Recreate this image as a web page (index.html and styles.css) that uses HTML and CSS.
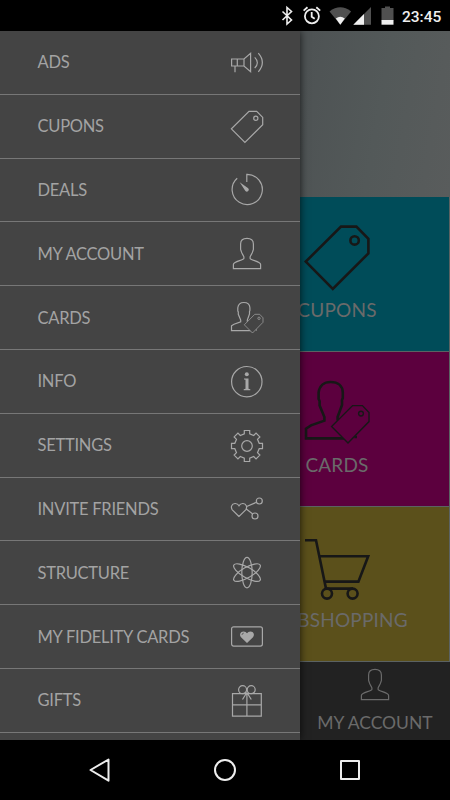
FILE: index.html
```
<!DOCTYPE html>
<html lang="en">
<head>
  <meta charset="UTF-8" />
  <meta name="viewport" content="width=device-width, initial-scale=1.0" />
  <title>Menu</title>
  <link rel="stylesheet" href="styles.css">
</head>
<body>
  <!-- shared icons, 32x32 -->
  <svg class="sprite">
    <symbol id="ads" viewBox="0 0 32 32" overflow="visible">
      <path d="M.6 12H13L19.6 6.3V24.6L13 19H.6ZM6.3 12V19M4 19V25.3M13 12V19M23.7 10.4Q29 15.6 23.7 21M27.3 6.2Q35.4 15.5 27.3 24.8" />
    </symbol>
    <symbol id="tag" viewBox="0 0 32 32" overflow="visible">
      <path d="M.4 17.8 13.9 31.4 31.7 13.7V6.4L25.7.3H18Z" />
      <circle cx="24.8" cy="7.2" r="2.1" />
    </symbol>
    <symbol id="deals" viewBox="0 0 32 32" overflow="visible">
      <path d="M15.8 8V.4A15.1 15.1 0 1 1 6.2 4.2" />
      <path class="solid" d="M8.7 8.2 17.2 14.2A1.7 1.7 0 0 1 14.4 17Z" />
    </symbol>
    <symbol id="person" viewBox="0 0 32 32" overflow="visible">
      <path d="M16 .4C12 .4 9.600 2.200 9.600 6V11.500L10.300 13.500C10.700 16 12.900 17.500 12.900 19V20.300C12.500 22.500 2.400 23 2.400 26.500V30.600H29.600V26.500C29.600 23 19.500 22.500 19.100 20.300V19C19.100 17.500 21.300 16 21.700 13.500L22.400 11.500V6C22.400 2.200 20 .4 16 .4Z" />
    </symbol>
    <symbol id="cards" viewBox="0 0 32 32" overflow="visible">
      <path d="M26 28H24.700M22 28.700H.5V23.800L3 22.200 9.700 19.800V18L7.300 12.300V10L6.800 9V5.800C7.200 2.500 9.500.5 12.800.5 16.500.5 18.800 2.500 18.900 5.800V8.500L18.500 9.500V12L16.300 18V19.700" />
      <path class="thin cover" d="M13.300 22.800 21.500 31 32 20.300V15.800L28.700 12.300H23.800Z" />
      <circle class="thin" cx="28" cy="16.300" r="1.200" />
    </symbol>
    <symbol id="info" viewBox="0 0 32 32" overflow="visible">
      <circle cx="15.800" cy="15.700" r="15.200" />
      <circle class="solid" cx="15.800" cy="8.200" r="2" />
      <path class="solid" d="M13 12.500H17.500V22.800L19.300 23.200V24.200H12.700V23.200L14.500 22.800V13.800L13 13.500Z" />
    </symbol>
    <symbol id="settings" viewBox="-16 -16 32 32" overflow="visible">
      <path d="M-2.700-12.200V-15.500H2.700V-12.200L6.700-10.500 9.050-12.870 12.870-9.050 10.500-6.700 12.200-2.700H15.500V2.700H12.200L10.500 6.700 12.870 9.050 9.050 12.870 6.700 10.500 2.700 12.200V15.500H-2.700V12.200L-6.700 10.500-9.050 12.870-12.870 9.050-10.500 6.700-12.200 2.700H-15.500V-2.700H-12.200L-10.500-6.700-12.870-9.050-9.050-12.870-6.700-10.500Z" />
      <circle r="5.300" />
    </symbol>
    <symbol id="invite" viewBox="0 0 32 32" overflow="visible">
      <path d="M8 23.500 1.300 16.800C-.5 14.500.5 10.800 4 10.500 6 10.400 7.300 11.500 8 12.800 8.700 11.500 10 10.400 12 10.500 15.500 10.800 16.500 14.500 14.700 16.800ZM15.700 13.500 25.500 9.300M15.300 16 21.700 20.900" />
      <circle cx="28.300" cy="8" r="3" />
      <circle cx="24" cy="23" r="3" />
    </symbol>
    <symbol id="structure" viewBox="-16 -16 32 32" overflow="visible">
      <ellipse cy="-.4" rx="5.200" ry="15.200" />
      <ellipse rx="5.200" ry="15.200" transform="translate(0 -.4) rotate(60)" />
      <ellipse rx="5.200" ry="15.200" transform="translate(0 -.4) rotate(-60)" />
    </symbol>
    <symbol id="fidelity" viewBox="0 0 32 32" overflow="visible">
      <rect x=".6" y="5.800" width="30.800" height="19.300" rx="2" />
      <path class="solid" d="M16 22 10 16.200C8 13.700 9.300 10.500 12.500 10.400 14.300 10.400 15.300 11.300 16 12.300 16.700 11.300 17.700 10.400 19.500 10.400 22.700 10.500 24 13.700 22 16.200Z" />
      <path class="shine" d="M11 13.800Q11.200 12.300 12.700 12.100" />
    </symbol>
    <symbol id="gifts" viewBox="0 0 32 32" overflow="visible">
      <path d="M1.500 8.700H30.300V31.200H1.500ZM15.900 8.700V31.200M1.500 19.800H30.300M15.900 7.500 11.500 14.500M15.900 7.500 20.300 14.500" />
      <circle cx="11.600" cy="4.700" r="4" />
      <circle cx="20.200" cy="4.700" r="4" />
    </symbol>
    <symbol id="cart" viewBox="0 0 32 32" overflow="visible">
      <path d="M0 2.100H5.500L10.500 26.300H24M7.200 10.100H31.600L26.700 22.800H9.800" />
      <circle cx="11" cy="28.800" r="2.500" />
      <circle cx="23.800" cy="28.800" r="2.500" />
    </symbol>
  </svg>

  <div class="statusbar">
    <svg width="112" height="22" viewBox="280 5 112 22">
      <path class="bluetooth" d="M282.500 11.500 291.500 20 287 24V7.500L291.500 11.500 282.500 20" />
      <circle class="alarm" cx="311.900" cy="16.300" r="7" />
      <path class="alarm" d="M311.700 12V16.800L314.700 18.800M303.600 10.600 307.500 7.200M320.200 10.600 316.300 7.200" />
      <path class="dim" d="M329.500 11.500Q340.300 3.200 351.100 11.500L340.300 24.700Z" />
      <path class="lit" d="M335.800 18.500Q340.300 15 344.800 18.500L340.300 24.700Z" />
      <path class="dim" d="M371 7V24.700H353.300Z" />
      <path class="lit" d="M364 14V24.700H353.300Z" />
      <path class="dim" d="M381.500 8H385V6.500H390V8H393.500V20.500H381.500Z" />
      <path class="lit" d="M381.500 20H393.500V24.700H381.500Z" />
    </svg>
    <span class="clock">23:45</span>
  </div>

  <div class="app">
    <div class="home">
      <div class="hero"></div>
      <div class="tile cyan">
        <svg class="big"><use href="#tag" /></svg>
        <span>CUPONS</span>
      </div>
      <div class="tile magenta">
        <svg class="big"><use href="#cards" /></svg>
        <span>CARDS</span>
      </div>
      <div class="tile yellow">
        <svg class="big"><use href="#cart" /></svg>
        <span>WEBSHOPPING</span>
      </div>
      <div class="account">
        <svg class="icon"><use href="#person" /></svg>
        <span>MY ACCOUNT</span>
      </div>
    </div>

    <div class="sidebar">
      <a><span>ADS</span><svg class="icon"><use href="#ads" /></svg></a>
      <a><span>CUPONS</span><svg class="icon"><use href="#tag" /></svg></a>
      <a><span>DEALS</span><svg class="icon"><use href="#deals" /></svg></a>
      <a><span>MY ACCOUNT</span><svg class="icon"><use href="#person" /></svg></a>
      <a><span>CARDS</span><svg class="icon"><use href="#cards" /></svg></a>
      <a><span>INFO</span><svg class="icon"><use href="#info" /></svg></a>
      <a><span>SETTINGS</span><svg class="icon"><use href="#settings" /></svg></a>
      <a><span>INVITE FRIENDS</span><svg class="icon"><use href="#invite" /></svg></a>
      <a><span>STRUCTURE</span><svg class="icon"><use href="#structure" /></svg></a>
      <a><span>MY FIDELITY CARDS</span><svg class="icon"><use href="#fidelity" /></svg></a>
      <a><span>GIFTS</span><svg class="icon"><use href="#gifts" /></svg></a>
    </div>
  </div>

  <div class="navbar">
    <svg viewBox="0 0 26 26"><path d="M3.500 13 21.500 2.500V23.700Z" /></svg>
    <svg viewBox="0 0 26 26"><circle cx="13" cy="13" r="10" /></svg>
    <svg viewBox="0 0 26 26"><rect x="4" y="4" width="18" height="18" /></svg>
  </div>
</body>
</html>
```
FILE: styles.css
```
* { box-sizing: border-box; margin: 0; padding: 0; }

body {
  width: 450px;
  height: 800px;
  overflow: hidden;
  background: #000;
  font-family: Lato, sans-serif;
  display: flex;
  flex-direction: column;
}

.sprite {
  position: absolute;
  width: 0;
  height: 0;
}

svg {
  flex: none;
  fill: none;
  overflow: visible;
}

.statusbar {
  height: 31px;
  padding: 5px 9px 0 0;
  display: flex;
  justify-content: flex-end;
}

.statusbar .bluetooth { stroke: #eee; stroke-width: 1.6; }
.statusbar .alarm { stroke: #eee; stroke-width: 1.8; }
.statusbar .dim { fill: #505050; }
.statusbar .lit { fill: #f0f0f0; }

.clock {
  width: 39px;
  margin-left: 10px;
  font: 500 15.5px/24px Roboto, sans-serif;
  color: #eee;
  white-space: nowrap;
}

.app {
  position: relative;
  height: 709px;
  overflow: hidden;
}

/* home screen, dimmed behind the menu */
.home {
  height: 709px;
  display: grid;
  grid-template-columns: 225px 75px 150px;
  grid-template-rows: 166px 155px 155px 155px 78px;
  background: #222;
  color: #6a6a6a;
}

.hero {
  grid-column: 1 / 4;
  background: linear-gradient(100deg, #4e5354 65%, #535959 82%, #595c5c);
}

.tile {
  grid-column: 2 / 4;
  display: flex;
  flex-direction: column;
  align-items: center;
  padding-top: 29px;
  font-size: 19px;
  line-height: 24px;
  letter-spacing: .2px;
  border-right: 1px solid #5b6262;
  border-bottom: 1px solid #5b6262;
}

.tile span { margin-top: 8px; }

.cyan { background: #004c59; }
.magenta { background: #5c003e; }
.yellow { background: #5b501b; }

.big {
  width: 64px;
  height: 64px;
  stroke: #171717;
  stroke-width: 1.300;
}

.account {
  grid-column: 3;
  display: flex;
  flex-direction: column;
  align-items: center;
  padding-top: 7px;
  font-size: 17.500px;
  line-height: 22px;
}

.account span { margin-top: 11px; }
.account .icon { stroke: #6a6a6a; }

.sidebar {
  position: absolute;
  top: 0;
  left: 0;
  width: 300px;
  height: 709px;
  background: #444;
  box-shadow: 0 0 8px rgba(0, 0, 0, 0.75);
}

.sidebar a {
  height: 63.800px;
  padding: 1px 37px 0 37.500px;
  display: flex;
  align-items: center;
  justify-content: space-between;
  border-bottom: 1.500px solid #777;
  color: #a3a3a3;
  font-size: 16.500px;
  letter-spacing: -.25px;
}

.sidebar span { padding-bottom: 1px; }

.icon {
  width: 32px;
  height: 32px;
  stroke: #a8a8a8;
  stroke-width: 1.200;
}

.solid { fill: #a8a8a8; stroke: none; }
.thin { stroke-width: .7; }
.shine { stroke: #444; stroke-width: .8; }
.sidebar .icon { --surface: #444; }
.magenta { --surface: #5c003e; }
.cover { fill: var(--surface); }

.navbar {
  height: 60px;
  padding: 0 87px;
  display: flex;
  align-items: center;
  justify-content: space-between;
}

.navbar svg {
  width: 26px;
  height: 26px;
  stroke: #eee;
  stroke-width: 2;
  stroke-linejoin: round;
}
```
